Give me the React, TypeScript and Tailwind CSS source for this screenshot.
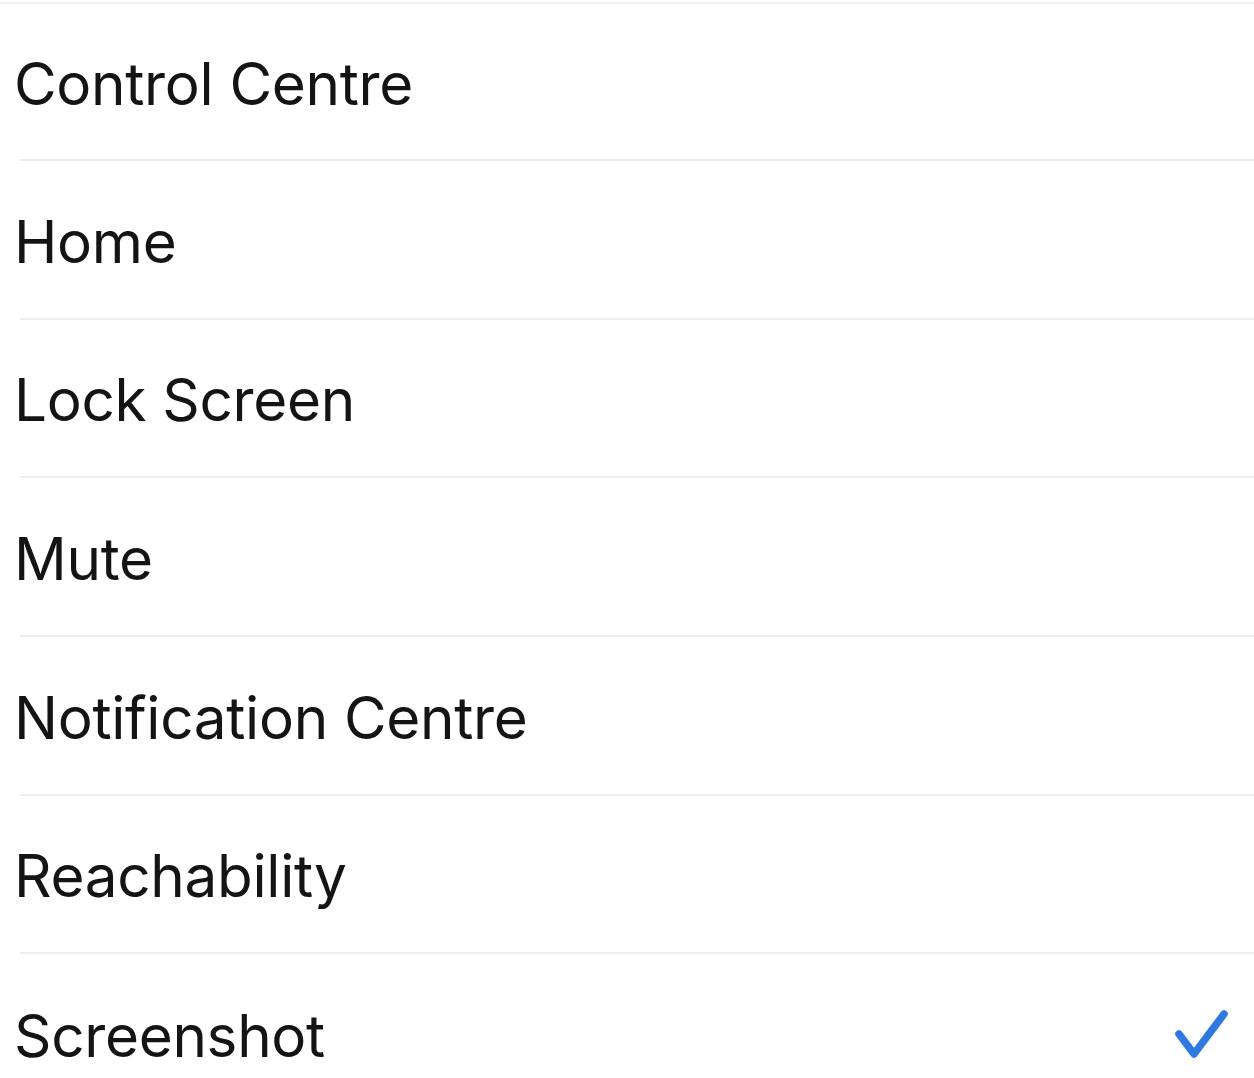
import React from "react";

const items = [
  "Control Centre",
  "Home",
  "Lock Screen",
  "Mute",
  "Notification Centre",
  "Reachability",
  "Screenshot",
];

export default function App() {
  return (
    <div
      className="w-[1254px] h-[1078px] overflow-hidden bg-white"
      style={{ fontFamily: "Inter, 'Noto Sans', sans-serif" }}
    >
      <div className="mt-[2px] h-[2px] bg-[#f0f0f0]" />
      {items.map((label, i) => (
        <div key={label} className="pl-[20px]">
          <div
            className={`flex items-center justify-between pr-[24px] ${
              i === 0 ? "h-[157.3px]" : "h-[158.6px]"
            } ${i < items.length - 1 ? "border-b-2 border-[#ededed]" : ""}`}
          >
            <span className="-ml-[6px] pt-[5px] text-[58.4px] leading-none tracking-[-0.3px] text-[#141414]">
              {label}
            </span>
            {label === "Screenshot" && (
              <svg
                width="60"
                height="56"
                viewBox="0 0 60 56"
                fill="none"
                className="mt-[6px] mr-[-2px]"
              >
                <path
                  d="M7 25 L22 45 L52 5"
                  stroke="#2f78e0"
                  strokeWidth="7.5"
                  strokeLinecap="round"
                  strokeLinejoin="round"
                />
              </svg>
            )}
          </div>
        </div>
      ))}
    </div>
  );
}
